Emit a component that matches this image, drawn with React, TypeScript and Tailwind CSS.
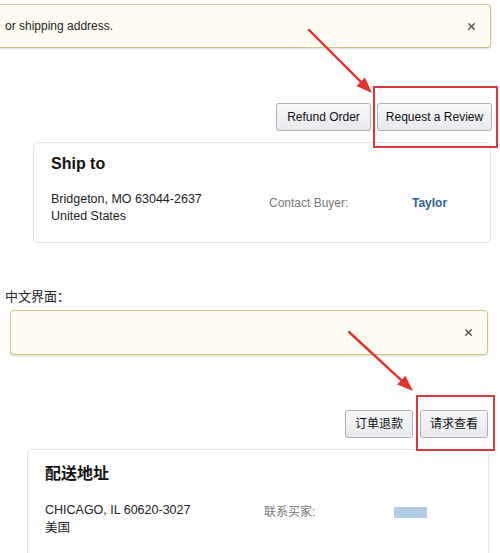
import { X } from 'lucide-react';

const font = "font-['Liberation_Sans','Noto_Sans_CJK_SC',sans-serif]";

function Alert({ text, className }: { text?: string; className: string }) {
  return (
    <div
      className={`flex items-center justify-between border border-[#cfc48a] bg-[#fffdf3] rounded-[4px] shadow-[0_1px_2px_rgba(120,110,60,0.25)] ${className}`}
    >
      <span className="text-[12px] text-[#222]">{text}</span>
      <X size={11} strokeWidth={3.2} className="text-[#555]" />
    </div>
  );
}

function Btn({ label, className = '' }: { label: string; className?: string }) {
  return (
    <button
      className={`h-[28px] px-0 whitespace-nowrap rounded-[3px] border border-[#adb1b8] bg-gradient-to-b from-[#f7f8fa] to-[#e7e9ec] text-[12px] text-[#111] shadow-[0_1px_0_rgba(255,255,255,0.6)_inset] ${className}`}
    >
      {label}
    </button>
  );
}

function Arrow({ x1, y1, x2, y2 }: { x1: number; y1: number; x2: number; y2: number }) {
  const a = Math.atan2(y2 - y1, x2 - x1);
  const len = 16;
  const w = 6;
  const bx = x2 - Math.cos(a) * len;
  const by = y2 - Math.sin(a) * len;
  const px = -Math.sin(a) * w;
  const py = Math.cos(a) * w;
  return (
    <>
      <line x1={x1} y1={y1} x2={bx} y2={by} stroke="#e2332c" strokeWidth={2.4} strokeLinecap="round" />
      <polygon points={`${x2},${y2} ${bx + px},${by + py} ${bx - px},${by - py}`} fill="#e2332c" />
    </>
  );
}

export default function App() {
  return (
    <div className={`relative w-[500px] h-[553px] overflow-hidden bg-white ${font}`}>
      {/* English view */}
      <div className="pt-[4px]">
        <Alert text="or shipping address." className="h-[44px] ml-[-14px] mr-[9px] pl-[18px] pr-[13px]" />

        <div className="flex justify-end gap-[6px] mt-[55px] mr-[8px]">
          <Btn label="Refund Order" className="w-[95px]" />
          <Btn label="Request a Review" className="w-[115px]" />
        </div>

        <div className="mt-[11px] ml-[33px] mr-[9px] h-[101px] border border-[#e3e3e3] rounded-[5px] pl-[17px] pt-[11px]">
          <h2 className="text-[16px] font-bold text-[#111] leading-[20px]">Ship to</h2>
          <div className="flex mt-[17px] text-[12.5px] leading-[17px]">
            <div className="w-[218px] text-[#222]">
              <div>Bridgeton, MO 63044-2637</div>
              <div>United States</div>
            </div>
            <div className="w-[143px] pt-[4px] text-[12px] text-[#777]">Contact Buyer:</div>
            <div className="pt-[4px] text-[12px] font-bold text-[#2a6496]">Taylor</div>
          </div>
        </div>
      </div>

      {/* Chinese view */}
      <div className="mt-[46px] pl-[5px] text-[13px] leading-[16px] text-[#222]">中文界面：</div>

      <Alert className="h-[45px] mt-[5px] ml-[10px] mr-[12px] pr-[13px]" />

      <div className="flex justify-end gap-[7px] mt-[55px] mr-[12px]">
        <Btn label="订单退款" className="w-[68px] h-[27px]" />
        <Btn label="请求查看" className="w-[68px] h-[27px]" />
      </div>

      <div className="mt-[11px] ml-[27px] mr-[11px] h-[130px] border border-[#e3e3e3] rounded-[5px] pl-[17px] pt-[14px]">
        <h2 className="text-[16px] font-bold text-[#111] leading-[20px]">配送地址</h2>
        <div className="flex mt-[17px] text-[12.5px] leading-[18px]">
          <div className="w-[219px] text-[#222]">
            <div>CHICAGO, IL 60620-3027</div>
            <div>美国</div>
          </div>
          <div className="w-[130px] pt-[2px] text-[12px] text-[#777]">联系买家:</div>
          <div className="pt-[6px]">
            <div className="w-[33px] h-[11px] bg-[#b3cde6] blur-[0.5px]" />
          </div>
        </div>
      </div>

      {/* annotations */}
      <div className="absolute left-[373px] top-[86px] w-[125px] h-[62px] border-2 border-[#d9363e]" />
      <div className="absolute left-[416px] top-[395px] w-[79px] h-[56px] border-2 border-[#d9363e]" />
      <svg className="absolute inset-0 pointer-events-none" width={500} height={553}>
        <Arrow x1={309} y1={30} x2={372} y2={93} />
        <Arrow x1={349} y1={332} x2={413} y2={391} />
      </svg>
    </div>
  );
}
